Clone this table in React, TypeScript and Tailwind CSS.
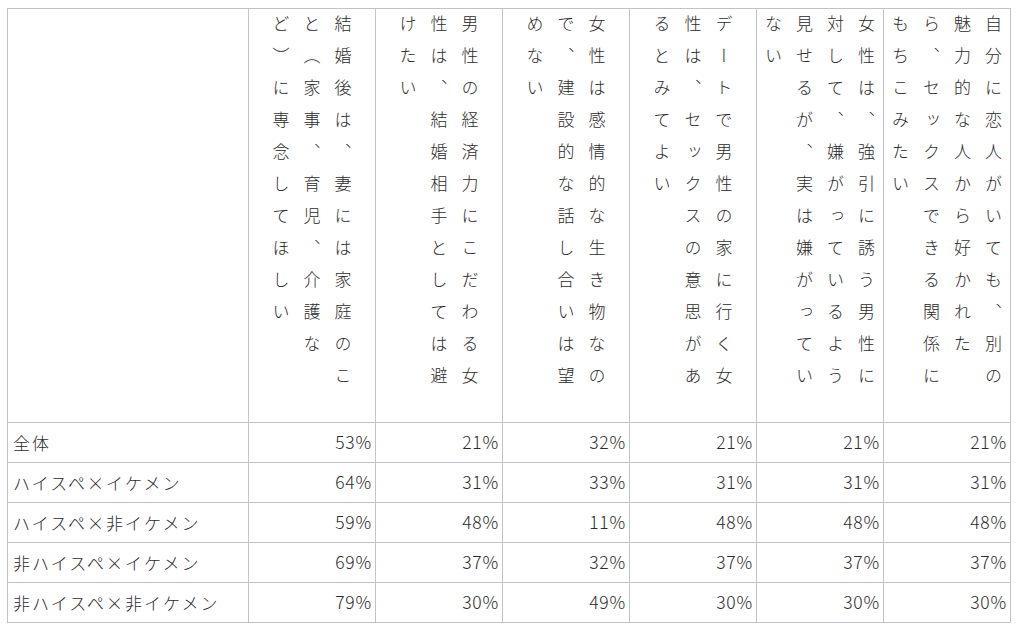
import React from "react";

const headers: string[][] = [
  ["結婚後は、妻には家庭のこ", "と（家事、育児、介護な", "ど）に専念してほしい"],
  ["男性の経済力にこだわる女", "性は、結婚相手としては避", "けたい"],
  ["女性は感情的な生き物なの", "で、建設的な話し合いは望", "めない"],
  ["デートで男性の家に行く女", "性は、セックスの意思があ", "るとみてよい"],
  ["女性は、強引に誘う男性に", "対して、嫌がっているよう", "見せるが、実は嫌がってい", "ない"],
  ["自分に恋人がいても、別の", "魅力的な人から好かれた", "ら、セックスできる関係に", "もちこみたい"],
];

const rows: { label: string; values: string[] }[] = [
  { label: "全体", values: ["53%", "21%", "32%", "21%", "21%", "21%"] },
  { label: "ハイスペ×イケメン", values: ["64%", "31%", "33%", "31%", "31%", "31%"] },
  { label: "ハイスペ×非イケメン", values: ["59%", "48%", "11%", "48%", "48%", "48%"] },
  { label: "非ハイスペ×イケメン", values: ["69%", "37%", "32%", "37%", "37%", "37%"] },
  { label: "非ハイスペ×非イケメン", values: ["79%", "30%", "49%", "30%", "30%", "30%"] },
];

export default function App() {
  return (
    <div
      className="w-[1019px] h-[632px] bg-white pl-[7px] pt-[8px] text-[#2b2b2b] font-light"
      style={{ fontFamily: '"Noto Sans CJK JP", "Noto Sans", sans-serif' }}
    >
      <div className="inline-grid grid-cols-[240px_repeat(6,126px)] grid-rows-[413px_repeat(5,39px)] gap-px p-px bg-[#c3c3c3]">
        <div className="bg-white" />
        {headers.map((lines, i) => (
          <div key={i} className="bg-white flex justify-center items-start pt-[6px] overflow-hidden">
            <div className="[writing-mode:vertical-rl] text-[17px] leading-[31px] tracking-[15px] whitespace-pre">
              {lines.join("\n")}
            </div>
          </div>
        ))}
        {rows.map((r) => (
          <React.Fragment key={r.label}>
            <div className="bg-white flex items-center pl-[5px] text-[17px] tracking-[2px] whitespace-nowrap">
              {r.label}
            </div>
            {r.values.map((v, j) => (
              <div key={j} className="bg-white flex items-center justify-end pr-[3px] text-[17.5px] tracking-[0.8px]">
                {v}
              </div>
            ))}
          </React.Fragment>
        ))}
      </div>
    </div>
  );
}
